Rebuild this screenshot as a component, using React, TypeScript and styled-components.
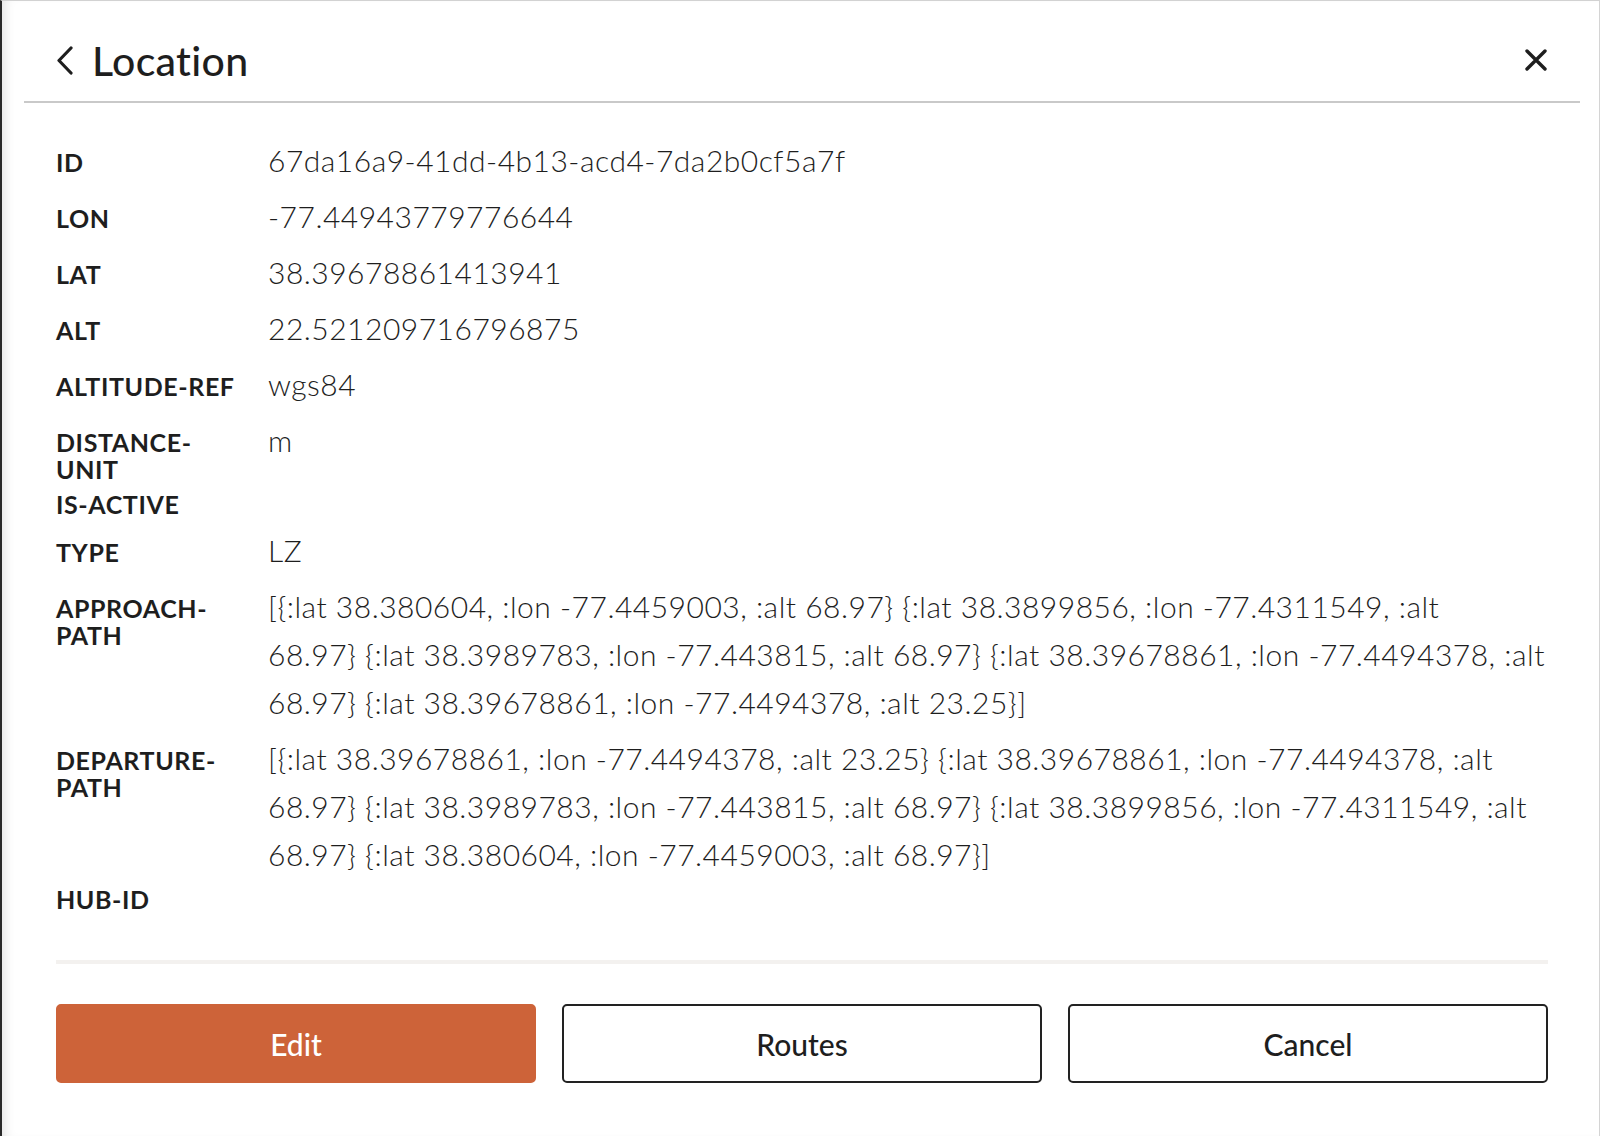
import styled, { createGlobalStyle } from "styled-components";

type Field = {
  label: string;
  value: string;
};

// long path values keep their own line breaks
const fields: Field[] = [
  { label: "ID", value: "67da16a9-41dd-4b13-acd4-7da2b0cf5a7f" },
  { label: "LON", value: "-77.44943779776644" },
  { label: "LAT", value: "38.39678861413941" },
  { label: "ALT", value: "22.521209716796875" },
  { label: "ALTITUDE-REF", value: "wgs84" },
  { label: "DISTANCE-UNIT", value: "m" },
  { label: "IS-ACTIVE", value: "" },
  { label: "TYPE", value: "LZ" },
  {
    label: "APPROACH-PATH",
    value:
      "[{:lat 38.380604, :lon -77.4459003, :alt 68.97} {:lat 38.3899856, :lon -77.4311549, :alt\n68.97} {:lat 38.3989783, :lon -77.443815, :alt 68.97} {:lat 38.39678861, :lon -77.4494378, :alt\n68.97} {:lat 38.39678861, :lon -77.4494378, :alt 23.25}]",
  },
  {
    label: "DEPARTURE-PATH",
    value:
      "[{:lat 38.39678861, :lon -77.4494378, :alt 23.25} {:lat 38.39678861, :lon -77.4494378, :alt\n68.97} {:lat 38.3989783, :lon -77.443815, :alt 68.97} {:lat 38.3899856, :lon -77.4311549, :alt\n68.97} {:lat 38.380604, :lon -77.4459003, :alt 68.97}]",
  },
  { label: "HUB-ID", value: "" },
];

const GlobalStyle = createGlobalStyle`
  html, body {
    margin: 0;
    padding: 0;
    background: #ffffff;
  }
  body {
    font-family: Lato, "Noto Sans", sans-serif;
    color: #1e1e1e;
  }
`;

const Panel = styled.div`
  min-height: 1136px;
  box-sizing: border-box;
  background: #ffffff;
  border-left: 2px solid #2a2a2a;
  border-top: 1px solid #d2d2d2;
  border-right: 1px solid #d4d4d4;
  box-shadow: inset 10px 0 12px -8px rgba(0, 0, 0, 0.12);
`;

const Header = styled.header`
  margin: 0 19px 0 22px;
  height: 82px;
  padding: 18px 33px 0 32px;
  border-bottom: 2px solid #c9c9c9;
  display: flex;
  align-items: center;
  justify-content: space-between;
`;

const TitleGroup = styled.div`
  display: flex;
  align-items: center;
  gap: 18px;
`;

const IconButton = styled.button`
  border: 0;
  background: none;
  padding: 0;
  display: flex;
  align-items: center;
  color: #1e1e1e;
  cursor: pointer;
`;

const Title = styled.h1`
  margin: 0;
  font-size: 41px;
  font-weight: 500;
  letter-spacing: 0.3px;
  color: #1e1e1e;
`;

const Body = styled.div`
  padding: 0 51px 0 54px;
`;

const Details = styled.dl`
  margin: 0;
  padding: 33px 0 0;
  display: flex;
  flex-direction: column;
  gap: 8px;
`;

const Row = styled.div`
  display: flex;
  align-items: baseline;
`;

const Label = styled.dt`
  flex: 0 0 186px;
  margin-right: 26px;
  font-size: 25px;
  font-weight: 700;
  letter-spacing: 0.6px;
  line-height: 27px;
  color: #1e1e1e;
  overflow-wrap: break-word;
`;

const Value = styled.dd`
  margin: 0;
  flex: 1;
  white-space: pre-line;
  font-size: 30px;
  font-weight: 300;
  letter-spacing: 0.5px;
  line-height: 48px;
  color: #1e1e1e;
`;

const Footer = styled.footer`
  margin-top: 47px;
  border-top: 4px solid #f3f1ef;
  padding-top: 40px;
  display: grid;
  grid-template-columns: repeat(3, 1fr);
  gap: 26px;
`;

const ActionButton = styled.button<{ $primary?: boolean }>`
  height: 79px;
  border-radius: 5px;
  font-family: Lato, "Noto Sans", sans-serif;
  font-size: 30px;
  font-weight: 500;
  cursor: pointer;
  border: 2px solid ${(p) => (p.$primary ? "#cd6339" : "#222222")};
  background: ${(p) => (p.$primary ? "#cd6339" : "#ffffff")};
  color: ${(p) => (p.$primary ? "#ffffff" : "#1e1e1e")};
`;

const Chevron = () => (
  <svg width="18" height="29" viewBox="0 0 18 29" fill="none">
    <polyline
      points="15,2 3,14.5 15,27"
      stroke="currentColor"
      strokeWidth="3.2"
      strokeLinecap="round"
      strokeLinejoin="round"
    />
  </svg>
);

const CloseIcon = () => (
  <svg width="22" height="22" viewBox="0 0 22 22" fill="none">
    <path
      d="M2 2 L20 20 M20 2 L2 20"
      stroke="currentColor"
      strokeWidth="3.4"
      strokeLinecap="round"
    />
  </svg>
);

export default function App() {
  return (
    <>
      <GlobalStyle />
      <Panel>
        <Header>
          <TitleGroup>
            <IconButton aria-label="Back">
              <Chevron />
            </IconButton>
            <Title>Location</Title>
          </TitleGroup>
          <IconButton aria-label="Close">
            <CloseIcon />
          </IconButton>
        </Header>
        <Body>
          <Details>
            {fields.map((f) => (
              <Row key={f.label}>
                <Label>{f.label}</Label>
                <Value>{f.value}</Value>
              </Row>
            ))}
          </Details>
          <Footer>
            <ActionButton $primary>Edit</ActionButton>
            <ActionButton>Routes</ActionButton>
            <ActionButton>Cancel</ActionButton>
          </Footer>
        </Body>
      </Panel>
    </>
  );
}
